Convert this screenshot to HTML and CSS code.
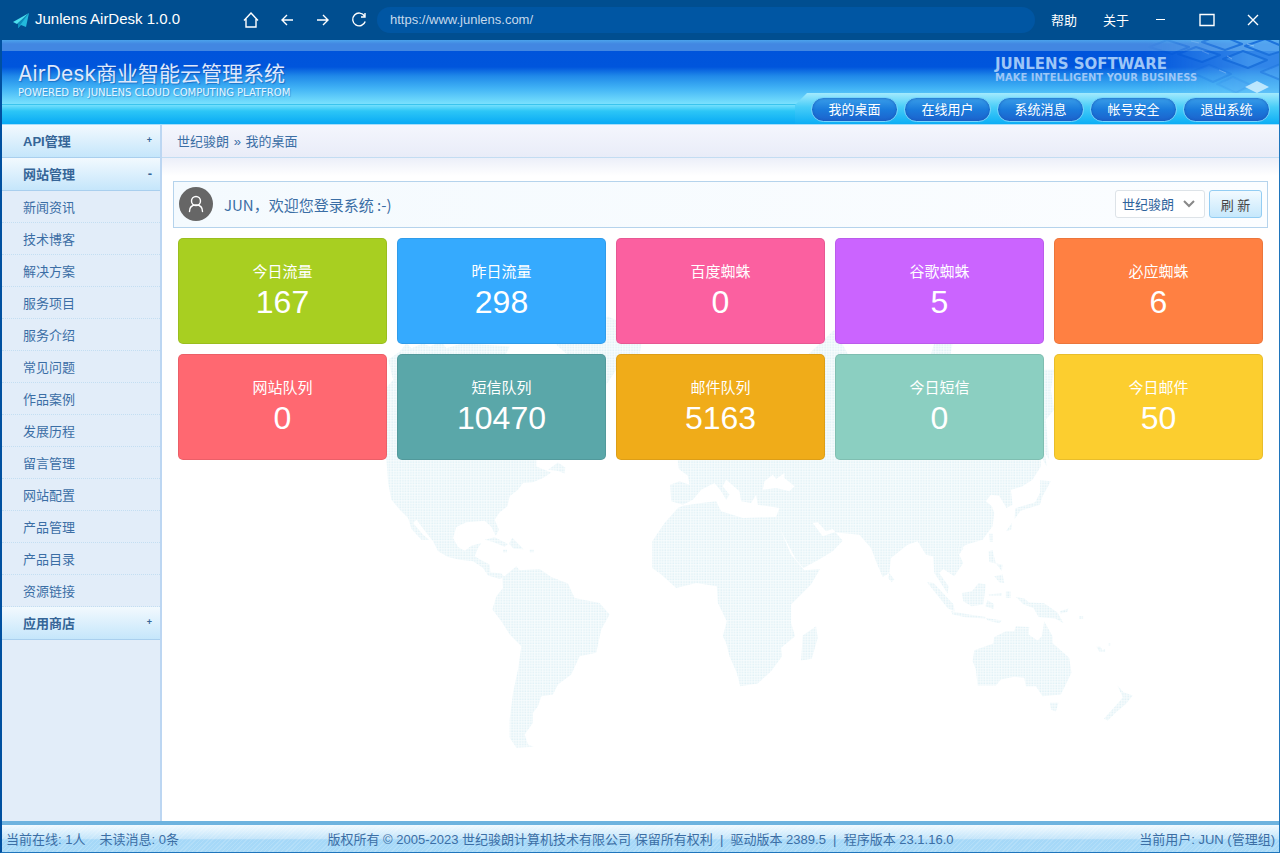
FILE: index.html
```
<!DOCTYPE html>
<html lang="zh-CN">
<head>
  <meta charset="utf-8">
  <meta name="viewport" content="width=device-width, initial-scale=1.0">
  <title>Junlens AirDesk 1.0.0</title>
  <link rel="stylesheet" href="styles.css">
</head>
<body>
  <div class="titlebar">
    <svg class="logo" width="16" height="15" viewBox="0 0 16 15">
      <path d="M16 0L0 9l4 2z" fill="#4de0ee"/>
      <path d="M16 0L5 11v4l3-3 5 2z" fill="#22b9dc"/>
      <path d="M16 0L5 11v4z" fill="#0d8fbd"/>
    </svg>
    <span class="app-name">Junlens AirDesk 1.0.0</span>
    <div class="tools">
      <button class="tool" aria-label="主页">
        <svg width="16" height="16" viewBox="0 0 16 16"><path d="M1 8.500L8 1l7 7.500M3 7v8h10V7"/></svg>
      </button>
      <button class="tool" aria-label="后退">
        <svg width="16" height="16" viewBox="0 0 16 16"><path d="M14 8H3M8 3L3 8l5 5"/></svg>
      </button>
      <button class="tool" aria-label="前进">
        <svg width="16" height="16" viewBox="0 0 16 16"><path d="M2 8h11M8 3l5 5-5 5"/></svg>
      </button>
      <button class="tool" aria-label="刷新页面">
        <svg width="16" height="16" viewBox="0 0 16 16"><path d="M13.500 4A6.400 6.400 0 1 0 14.200 9.500M14 1v4h-4"/></svg>
      </button>
    </div>
    <input class="address" type="text" value="https://www.junlens.com/" aria-label="地址">
    <div class="window-menu">
      <button>帮助</button>
      <button>关于</button>
    </div>
    <div class="window-controls">
      <button class="tool" aria-label="最小化">
        <svg width="16" height="16" viewBox="0 0 16 16"><path d="M3 7.500h9" stroke-width="1"/></svg>
      </button>
      <button class="tool" aria-label="最大化">
        <svg width="16" height="16" viewBox="0 0 16 16"><path d="M1 2.500h14v11H1z"/></svg>
      </button>
      <button class="tool" aria-label="关闭">
        <svg width="16" height="16" viewBox="0 0 16 16"><path d="M3 3l10 10M13 3L3 13"/></svg>
      </button>
    </div>
  </div>

  <div class="frame">
    <header class="header">
      <svg class="keyboard" width="150" height="53" viewBox="30 0 150 53">
        <defs>
          <linearGradient id="fade"><stop offset="0.1" stop-color="#fff" stop-opacity="0"/><stop offset=".8" stop-color="#fff"/></linearGradient>
          <mask id="fadeMask"><rect x="30" width="150" height="53" fill="url(#fade)"/></mask>
        </defs>
        <g mask="url(#fadeMask)">
          <rect x="30" width="150" height="53" fill="#6cc0f8" opacity=".45"/>
          <g fill="#4fa6f2" fill-opacity=".4" stroke="#1c72dc" stroke-width="2" stroke-linejoin="round">
            <path d="M50 7l18-7 22 7-17 7z"/>
            <path d="M103 2l18-7 22 9-17 6z"/>
            <path d="M79 14l18-7 24 8-18 7z"/>
            <path d="M124 19l20-8 24 9-19 8z"/>
            <path d="M146 6l20-7 24 10-20 6z"/>
            <path d="M162 32l22-9v18z" stroke-opacity=".5"/>
            <path d="M92 32l18-7 22 9-18 8z" stroke-opacity=".35"/>
            <path d="M118 44l16-7 18 8-15 8z" stroke-opacity=".15"/>
          </g>
          <path d="M146 47l12-6 12 6-12 6z" fill="#d8f4ff" opacity=".8"/>
          <path d="M92 1l8 2M103 11l7 3M128 16l5 3M148 4l7 2M120 30l7 3" stroke="#c9e8ff" stroke-width="1" opacity=".5"/>
        </g>
      </svg>
      <div class="brand">
        <h1>AirDesk商业智能云管理系统</h1>
        <p>POWERED BY JUNLENS CLOUD COMPUTING PLATFROM</p>
      </div>
      <div class="header-right">
        <div class="slogan">
          <strong>JUNLENS SOFTWARE</strong>
          <span>MAKE INTELLIGENT YOUR BUSINESS</span>
        </div>
        <nav class="nav">
          <a href="#">我的桌面</a>
          <a href="#">在线用户</a>
          <a href="#">系统消息</a>
          <a href="#">帐号安全</a>
          <a href="#">退出系统</a>
        </nav>
      </div>
    </header>

    <div class="body">
      <aside class="sidebar">
        <button class="menu-head">API管理<span class="plus">+</span></button>
        <button class="menu-head">网站管理<span>-</span></button>
        <ul class="menu">
          <li><a href="#">新闻资讯</a></li>
          <li><a href="#">技术博客</a></li>
          <li><a href="#">解决方案</a></li>
          <li><a href="#">服务项目</a></li>
          <li><a href="#">服务介绍</a></li>
          <li><a href="#">常见问题</a></li>
          <li><a href="#">作品案例</a></li>
          <li><a href="#">发展历程</a></li>
          <li><a href="#">留言管理</a></li>
          <li><a href="#">网站配置</a></li>
          <li><a href="#">产品管理</a></li>
          <li><a href="#">产品目录</a></li>
          <li><a href="#">资源链接</a></li>
        </ul>
        <button class="menu-head">应用商店<span class="plus">+</span></button>
      </aside>

      <main class="main">
        <!-- dotted world map behind the cards -->
        <svg class="map" viewBox="162 160 1118 660">
          <defs>
            <pattern id="dots" width="8" height="8" patternUnits="userSpaceOnUse">
              <rect width="8" height="8" fill="#fafdfe"/>
              <rect x="1" y="1" width="5" height="5" fill="#e0f1f6"/>
            </pattern>
          </defs>
          <g fill="url(#dots)" fill-rule="evenodd">
            <g transform="translate(370 440) scale(.3333)">
              <path d="M50 60L20 20 50-50 45-150 70-180 55-240 90-265 110-290 125-275 160-290 180-280 215-295 230-275 280-290 420-280 400-240 440-180 480-60 500 62 500 80 545 98 520 115 490 128 460 130 445 150 420 170 413 200 390 218 375 240 388 270 378 288 365 262 345 243 290 248 260 262 250 295 265 322 285 333 305 318 335 310 325 325 315 350 335 362 360 375 362 398 395 402 405 412 390 418 355 408 340 385 310 365 270 360 235 352 205 335 190 305 170 280 140 240 130 250 160 285 178 300 155 300 125 268 115 235 90 210 65 180 55 130z"/>
              <path d="M535 90l30-22 22 15-2 18-22-8zM345 300l30-7 40 20-10 8-35-14zM418 312l10-18 34 35-30-2zM400 330h12v8h-12zM480 330h12v8h-12z"/>
              <path d="M560-285l60-50 95-35 90 40 10 45-5 30-60 30-40 60-30 40-20-30-10-50z"/>
              <path d="M398 415L440 380 450 392 510 388 545 412 595 432 615 475 690 490 720 525 695 570 680 640 630 650 605 705 565 735 550 765 515 770 505 800 490 820 490 850 465 885 475 915 492 922 440 925 420 895 420 840 430 760 445 690 455 620 420 585 395 545 368 510 380 470 400 445z"/>
            </g>
            <g transform="translate(630 440) scale(.3333)">
              <path d="M145 62L190 20 160-40 210-130 340-190 530-250 615-330 660-250 900-240 915-290 970-290 960-235 1100-230 1245-210 1275-210 1265-150 1275-90 1250-60 1260 60 1235 20 1235 80 1210 120 1180 140 1145 150 1150 195 1132 205 1110 168 1085 165 1070 185 1088 200 1095 220 1090 260 1060 300 1010 315 985 335 1002 370 975 410 942 388 930 400 958 440 955 462 915 400 912 350 890 345 865 305 835 315 785 355 780 400 760 412 742 370 725 325 690 285 615 278 580 290 550 250 565 248 590 275 610 268 640 303 610 335 565 362 522 385 500 360 450 265 440 232 450 205 385 195 380 165 365 190 335 185 330 155 290 120 280 140 300 165 290 180 275 155 255 130 215 150 190 180 160 195 125 185 122 135 150 125 180 135 175 108 148 88zM400 150L405 125 430 105 440 118 465 100 465 115 495 140 480 155 440 145z"/>
              <path d="M145 205L160 198 215 190 260 185 275 215 340 235 440 232 455 275 485 345 525 392 572 388 545 435 485 495 485 550 497 590 455 625 458 650 425 695 385 732 332 740 322 700 300 650 290 610 280 590 292 545 265 490 262 440 200 430 140 445 95 405 68 385 68 305 105 250z"/>
              <path d="M560 560l5 35-18 63-32 5 5-75zM780 400l15 20-8 8-10-12z"/>
            </g>
            <g transform="translate(840 440) scale(.3333)">
              <path d="M263 428l20 2 60 65 3 20-20-8zM335 515l55 10 50 7-2 5-60-4-38-8zM368 460l30-5 20-25 22 5-8 60-35 5-25-15zM445 482l20 12-2 14-25-8zM448 465l40-5v8h-38zM448 335l12-3 10 40-20-5zM465 410l25-5 5 25-15-2zM470 372l20 3-2 20zM500 455h14v20h-14zM450 282h10v25h-8zM355 320l18 5-12 18-16-12zM440 535l48 8-8 8-35-8z"/>
              <path d="M530 472l25 5 15 12 45 2 40 28 18 32-25-14-50-5-15-27-30-10zM662 515l26-8-4 10-20 5zM720 530h12v8h-12zM772 622h12l6 10 8-4v8h-18zM808 612h6v6h-6z"/>
              <path d="M603 122l32 3-25 45-8 25-58 18-18 25 2-32 60-18 15-30zM500 275l18-25-2 20zM615 30l8 50-12-20z"/>
              <path d="M405 632L462 612 465 592 500 575 525 575 530 560 570 562 568 585 595 603 608 590 615 545 640 590 640 610 690 655 697 700 665 765 610 770 590 740 560 740 555 715 525 712 485 720 470 738 415 738 410 690 400 665z"/>
              <path d="M632 790h26l-8 26-14-5zM835 738l18 20 28 10-20 25-30 25-25 25-12-5 45-50 12-15z"/>
            </g>
          </g>
        </svg>

        <div class="breadcrumb"><a href="#">世纪骏朗</a> <span>»</span> <a href="#">我的桌面</a></div>
        <div class="content">
          <div class="welcome">
            <svg class="avatar" width="34" height="34" viewBox="0 0 34 34">
              <circle cx="17" cy="17" r="17" fill="#666"/>
              <g fill="none" stroke="#fff" stroke-width="1.400" stroke-linecap="round"><circle cx="17" cy="14" r="4.500"/><path d="M10.500 24.500c0-4 2.500-6.500 6.500-6.500s6.500 2.500 6.500 6.500"/></g>
            </svg>
            <span class="greeting">JUN，欢迎您登录系统 :-)</span>
            <select aria-label="站点">
              <option>世纪骏朗</option>
            </select>
            <button class="refresh">刷 新</button>
          </div>
          <div class="cards">
            <div class="card green"><span>今日流量</span><b>167</b></div>
            <div class="card blue"><span>昨日流量</span><b>298</b></div>
            <div class="card pink"><span>百度蜘蛛</span><b>0</b></div>
            <div class="card purple"><span>谷歌蜘蛛</span><b>5</b></div>
            <div class="card orange"><span>必应蜘蛛</span><b>6</b></div>
            <div class="card red"><span>网站队列</span><b>0</b></div>
            <div class="card teal"><span>短信队列</span><b>10470</b></div>
            <div class="card amber"><span>邮件队列</span><b>5163</b></div>
            <div class="card mint"><span>今日短信</span><b>0</b></div>
            <div class="card yellow"><span>今日邮件</span><b>50</b></div>
          </div>
        </div>
      </main>
    </div>

    <footer class="footer">
      <div class="online"><span>当前在线: 1人</span><span>未读消息: 0条</span></div>
      <div class="copyright">版权所有 © 2005-2023 世纪骏朗计算机技术有限公司 保留所有权利 &nbsp;|&nbsp; 驱动版本 2389.5 &nbsp;|&nbsp; 程序版本 23.1.16.0</div>
      <div class="user">当前用户: JUN (管理组)</div>
    </footer>
  </div>
</body>
</html>
```
FILE: styles.css
```
* {
  margin: 0;
  padding: 0;
  box-sizing: border-box;
}

body {
  display: flex;
  flex-direction: column;
  min-height: 100vh;
  font-family: "Liberation Sans", "Noto Sans CJK SC", sans-serif;
  font-size: 13px;
  color: #3b6ea5;
  background: #fff;
}

button,
input,
select {
  font: inherit;
  border: none;
  background: none;
}

button {
  cursor: pointer;
}

a {
  color: inherit;
  text-decoration: none;
}

/* window title bar */
.titlebar {
  display: flex;
  align-items: center;
  height: 40px;
  padding: 0 19px 0 13px;
  background: #004e90;
  color: #fff;
}

.app-name {
  width: 208px;
  margin-left: 6px;
  font-size: 15px;
  line-height: 18px;
  padding-bottom: 2px;
  white-space: nowrap;
}

.tools {
  display: flex;
  gap: 20px;
}

.tool {
  display: flex;
}

.tool svg {
  fill: none;
  stroke: #fff;
  stroke-width: 1.4;
}

.address {
  flex: 1;
  min-width: 0;
  height: 26px;
  margin-left: 10px;
  padding: 0 13px 2px;
  border-radius: 13px;
  background: #0056a3;
  color: #c5d9ec;
}

.window-menu {
  display: flex;
  gap: 26px;
  margin: 0 24px 0 16px;
  padding-bottom: 2px;
}

.window-menu button {
  color: #fff;
}

.window-controls {
  display: flex;
  gap: 30px;
}

.frame {
  flex: 1;
  display: flex;
  flex-direction: column;
  border: solid #1f75bc;
  border-width: 0 1px 1px 2px;
  border-left-color: #0050a0;
}

/* header */
.header {
  position: relative;
  display: flex;
  justify-content: space-between;
  height: 85px;
  background: linear-gradient(#4ba3ec 0, #4287e2 4px, #4287e2 11px, #0054db 11px, #0055dc 27px, #2089e9 36px, #40b2f5 48px, #72dcfc 62px, #7ce0fd 64px, #3bc4ee 64px, #3bc4ee 65px, #75e0fd 65px, #2dc6f6 71px, #0bacf5 83px, #0babf5 84px, #a8defa 84px);
}

.keyboard {
  position: absolute;
  top: 0;
  right: 0;
}

.brand {
  padding: 20px 0 0 16px;
  white-space: nowrap;
}

.brand h1 {
  font-family: Inter, "Noto Sans CJK SC", sans-serif;
  font-size: 21px;
  line-height: 28px;
  font-weight: 400;
  color: #dfe8fc;
  text-shadow: 1px 1px 1px rgba(0, 50, 140, 0.4);
}

.brand p {
  font-family: "DejaVu Sans", sans-serif;
  font-size: 10px;
  line-height: 10px;
  color: #e6f6ff;
  text-shadow: 1px 1px 1px rgba(0, 80, 170, 0.4);
}

.header-right {
  position: relative;
  display: flex;
  flex-direction: column;
  justify-content: space-between;
  padding-top: 16px;
}

.slogan {
  display: flex;
  flex-direction: column;
  align-self: flex-end;
  width: 284px;
  font-family: "DejaVu Sans", sans-serif;
  font-weight: bold;
  color: #9dc6f7;
  white-space: nowrap;
}

.slogan strong {
  font-size: 15px;
  line-height: 16px;
}

.slogan span {
  font-size: 10px;
  line-height: 12px;
}

.nav {
  display: flex;
  gap: 6px;
  padding: 4px 9px 3px 16px;
  background: linear-gradient(#a3eafd, #48cdf8 14px, #10b0f5 30px, #0babf5 31px, #a8defa 31px);
  clip-path: polygon(0 12px, 12px 0, 100% 0, 100% 100%, 0 100%);
}

.nav a {
  width: 87px;
  height: 25px;
  line-height: 24px;
  text-align: center;
  color: #fff;
  border: 1px solid #77d5fb;
  border-radius: 13px;
  background: linear-gradient(#3a9ee9, #1a7bdc 50%, #1c62cc);
  box-shadow: inset 0 0 3px #1656b5;
}

/* layout */
.body {
  flex: 1;
  display: flex;
}

.sidebar {
  width: 160px;
  border-right: 2px solid #bcd6f2;
  background: #e2edf9;
}

.menu-head {
  display: flex;
  justify-content: space-between;
  align-items: center;
  width: 100%;
  height: 33px;
  padding: 0 8px 2px 21px;
  font-weight: bold;
  color: #356597;
  background: linear-gradient(#f2f9fe, #c5e6fb);
  border-bottom: 1px solid #a9cfee;
}

.menu-head .plus {
  font-size: 9px;
}

.menu {
  list-style: none;
}

.menu a {
  display: block;
  height: 32px;
  padding-left: 21px;
  line-height: 33px;
  border-bottom: 1px dotted #c3def2;
}

.main {
  position: relative;
  flex: 1;
  min-width: 0;
}

.map {
  position: absolute;
  top: 35px;
  left: 0;
  z-index: -1;
  width: 100%;
}

.breadcrumb {
  height: 33px;
  padding-left: 15px;
  line-height: 34px;
  background: linear-gradient(#f4f6fd, #e9ecf8);
  border-bottom: 1px solid #c3dcf2;
}

.breadcrumb span {
  margin: 0 1px;
}

.content {
  padding: 23px 11px 10px;
  background: linear-gradient(#eceff9, rgba(255, 255, 255, 0) 18px);
}

.welcome {
  display: flex;
  align-items: center;
  height: 47px;
  padding: 0 5px 1px;
  border: 1px solid #b5d3ec;
  background: linear-gradient(90deg, #f4fafe, #fbfdff);
}

.greeting {
  flex: 1;
  margin-left: 11px;
  font-family: "Noto Sans CJK SC", sans-serif;
  font-size: 15px;
}

.welcome select {
  width: 90px;
  height: 28px;
  padding-left: 6px;
  appearance: none;
  color: #2f639c;
  border: 1px solid #dde3e8;
  border-radius: 3px;
  background: #fff url("data:image/svg+xml,%3Csvg xmlns='http://www.w3.org/2000/svg' width='12' height='8'%3E%3Cpath d='M1 1l5 5 5-5' fill='none' stroke='%23888' stroke-width='2'/%3E%3C/svg%3E") no-repeat right 9px center;
}

.refresh {
  width: 53px;
  height: 28px;
  margin-left: 4px;
  font-size: 13px;
  color: #444;
  border: 1px solid #93cdf3;
  border-radius: 3px;
  background: linear-gradient(#f2faff, #c6e8fc);
}

.cards {
  display: grid;
  grid-template-columns: repeat(5, 1fr);
  gap: 10px;
  padding: 10px 5px;
}

.card {
  display: flex;
  flex-direction: column;
  align-items: center;
  height: 106px;
  padding-top: 22px;
  color: #fff;
  border: 1px solid rgba(0, 0, 0, 0.08);
  border-radius: 5px;
}

.card span {
  font-size: 15px;
  line-height: 22px;
}

.card b {
  font-size: 32px;
  line-height: 38px;
  font-weight: normal;
}

.green { background-color: #a8cf21; }
.blue { background-color: #35aafe; }
.pink { background-color: #fb60a0; }
.purple { background-color: #cb64ff; }
.orange { background-color: #ff8042; }
.red { background-color: #ff6871; }
.teal { background-color: #5aa7a9; }
.amber { background-color: #f0ac19; }
.mint { background-color: #8bcfc1; }
.yellow { background-color: #fcce2f; }

/* status bar */
.footer {
  display: grid;
  grid-template-columns: 1fr auto 1fr;
  align-items: center;
  height: 31px;
  padding: 0 4px;
  border-top: 4px solid #6eb3df;
  white-space: nowrap;
  background:
    repeating-linear-gradient(135deg, rgba(255, 255, 255, 0.15) 0 1px, transparent 1px 3px),
    linear-gradient(#f2faff, #c4e5fa 50%, #a5d8f8 55%, #a8daf8);
}

.online {
  display: flex;
  gap: 14px;
}

.user {
  text-align: right;
}
```
